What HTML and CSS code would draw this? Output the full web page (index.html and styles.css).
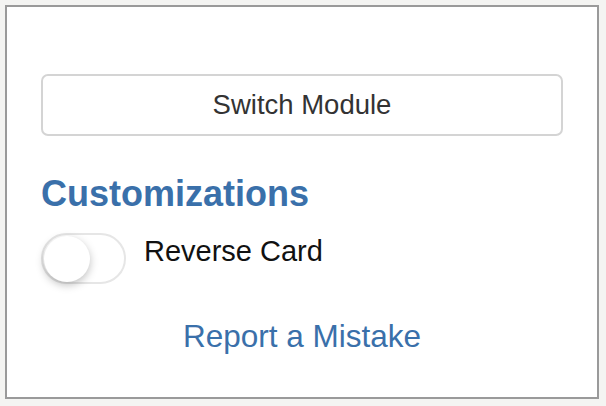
FILE: index.html
```html
<!DOCTYPE html>
<html lang="en">
<head>
    <meta charset="UTF-8">
    <title>Module Options</title>
    <link rel="stylesheet" href="styles.css">
</head>
<body>
    <div class="panel">
        <button class="switch-btn">Switch Module</button>
        <h2 class="section-title">Customizations</h2>
        <label class="option">
            <input type="checkbox" class="toggle-input">
            <span class="toggle"><span class="knob"></span></span>
            <span class="option-label">Reverse Card</span>
        </label>
        <a class="report" href="#">Report a Mistake</a>
    </div>
</body>
</html>
```

FILE: styles.css
```css
body {
    margin: 0;
    padding: 5px 7px 7px 5px;
    background-color: #f4f4f2;
    font-family: "Liberation Sans", Arial, sans-serif;
}
.panel {
    box-sizing: border-box;
    height: 394px;
    border: 2px solid #9a9a9a;
    background: white;
    padding: 67px 34px 0 34px;
    display: flex;
    flex-direction: column;
}
.switch-btn {
    height: 62px;
    background: white;
    border: 2px solid #d4d4d4;
    border-radius: 7px;
    font-family: inherit;
    font-size: 27.5px;
    color: #333;
}
.section-title {
    margin: 38px 0 0 0;
    font-size: 36px;
    line-height: 40px;
    color: #3a70aa;
}
.option {
    display: flex;
    align-items: flex-start;
    margin-top: 19px;
    gap: 18px;
}
.toggle-input {
    display: none;
}
.toggle {
    box-sizing: border-box;
    width: 85px;
    height: 51px;
    border: 2px solid #e6e6e6;
    border-radius: 26px;
    padding: 1px 0 0 1px;
    background: white;
}
.knob {
    display: block;
    width: 46px;
    height: 46px;
    border-radius: 50%;
    background: white;
    box-shadow: 0 3px 8px rgba(0, 0, 0, 0.25);
}
.option-label {
    font-size: 29px;
    line-height: 34px;
    margin-top: 1px;
    color: #111;
}
.report {
    align-self: center;
    margin-top: 34px;
    font-size: 31.5px;
    line-height: 36px;
    color: #3a70aa;
    text-decoration: none;
}
```
